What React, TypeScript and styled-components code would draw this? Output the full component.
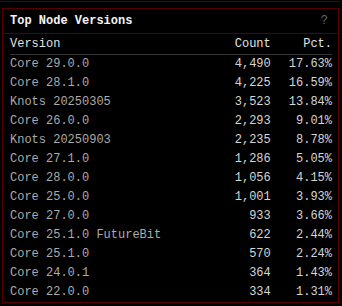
import React from "react";
import styled, { createGlobalStyle } from "styled-components";

const Global = createGlobalStyle`
  html, body { margin: 0; padding: 0; background: #000; }
  body { font-family: "Liberation Mono", "DejaVu Sans Mono", monospace; font-size: 12px; }
`;

const Page = styled.div`
  width: 342px;
  height: 306px;
  background: #000;
  display: flex;
  flex-direction: column;
  overflow: hidden;
`;

const PrevEdge = styled.div`
  height: 1px;
  width: 340px;
  margin-top: 1px;
  background: #560000;
`;

const Panel = styled.section`
  margin: 6px 0 0 2px;
  width: 337px;
  height: 295px;
  box-sizing: border-box;
  border: 1px solid #560000;
  background: #000;
  display: flex;
  flex-direction: column;
`;

const Header = styled.header`
  height: 24px;
  border-bottom: 1px solid #560000;
  display: flex;
  align-items: center;
  justify-content: space-between;
  padding: 0 10px 0 7px;
`;

const Title = styled.h2`
  margin: 0;
  font-size: 12px;
  font-weight: bold;
  color: #f4f4f4;
`;

const Help = styled.span`
  color: #666;
  font-size: 12px;
`;

const Table = styled.div`
  margin: 0 6px 0 7px;
  display: grid;
  grid-template-columns: 1fr auto auto;
`;

const Cell = styled.div<{ $right?: boolean; $head?: boolean; $num?: boolean }>`
  height: ${(p) => (p.$head ? "20px" : "19px")};
  line-height: ${(p) => (p.$head ? "20px" : "19px")};
  text-align: ${(p) => (p.$right ? "right" : "left")};
  padding-left: ${(p) => (p.$right ? "18px" : "0")};
  color: ${(p) => (p.$head ? "#e2e2e2" : p.$num ? "#d6d6d6" : "#ababab")};
  border-bottom: ${(p) => (p.$head ? "1px solid #333" : "none")};
  white-space: nowrap;
`;

const rows: [string, string, string][] = [
  ["Core 29.0.0", "4,490", "17.63%"],
  ["Core 28.1.0", "4,225", "16.59%"],
  ["Knots 20250305", "3,523", "13.84%"],
  ["Core 26.0.0", "2,293", "9.01%"],
  ["Knots 20250903", "2,235", "8.78%"],
  ["Core 27.1.0", "1,286", "5.05%"],
  ["Core 28.0.0", "1,056", "4.15%"],
  ["Core 25.0.0", "1,001", "3.93%"],
  ["Core 27.0.0", "933", "3.66%"],
  ["Core 25.1.0 FutureBit", "622", "2.44%"],
  ["Core 25.1.0", "570", "2.24%"],
  ["Core 24.0.1", "364", "1.43%"],
  ["Core 22.0.0", "334", "1.31%"],
];

export default function App() {
  return (
    <Page>
      <Global />
      <PrevEdge />
      <Panel>
        <Header>
          <Title>Top Node Versions</Title>
          <Help>?</Help>
        </Header>
        <Table>
          <Cell $head>Version</Cell>
          <Cell $head $right>Count</Cell>
          <Cell $head $right>Pct.</Cell>
          {rows.map(([v, c, p]) => (
            <React.Fragment key={v}>
              <Cell>{v}</Cell>
              <Cell $right $num>{c}</Cell>
              <Cell $right $num>{p}</Cell>
            </React.Fragment>
          ))}
        </Table>
      </Panel>
    </Page>
  );
}
